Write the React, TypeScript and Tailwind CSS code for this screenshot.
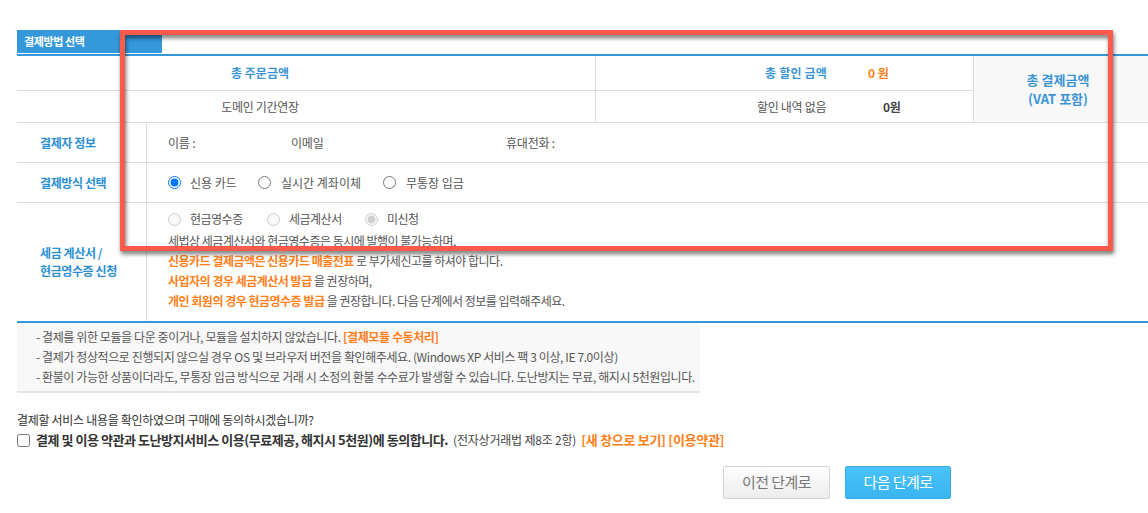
import React from "react";

const blue = "text-[#2b8fd6]";

function Radio({ checked, disabled }: { checked?: boolean; disabled?: boolean }) {
  return (
    <input
      type="radio"
      className="m-0 h-[13px] w-[13px] shrink-0"
      defaultChecked={checked}
      disabled={disabled}
      readOnly
    />
  );
}

export default function App() {
  return (
    <div className="relative h-[513px] w-[1148px] overflow-hidden bg-white font-['Noto_Sans_CJK_KR','Noto_Sans',sans-serif] text-[#555]">
      <div className="pl-[17px] pt-[30px]">
        {/* tab */}
        <div className="flex h-[23px] w-[145px] items-center bg-[#3498db] pl-[7px] text-[11px] font-bold tracking-[-0.4px] text-white">
          결제방법 선택
        </div>
        <div className="mt-[1px] w-[1140px] border-t-2 border-[#3498db]">
          {/* header */}
          <div className="flex border-b border-[#dddddd]">
            <div className="flex w-[578px] flex-col">
              <div className="flex h-[35px] items-center justify-center border-b border-[#dddddd] pr-[92px] text-[12px] font-bold text-[#3a95d6]">
                총 주문금액
              </div>
              <div className="flex h-[31px] items-center justify-center pr-[92px] text-[12px] tracking-[-0.3px]">
                도메인 기간연장
              </div>
            </div>
            <div className="flex w-[378px] flex-col border-l border-[#dddddd]">
              <div className="flex h-[35px] items-center border-b border-[#dddddd] pl-[169px]">
                <span className="w-[103px] text-[12px] font-bold text-[#3a95d6] tracking-[0.2px]">총 할인 금액</span>
                <span className="text-[12px] font-bold text-[#ff7f1a]">0 원</span>
              </div>
              <div className="flex h-[31px] items-center pl-[161px] text-[12px] tracking-[-0.3px]">
                <span className="w-[126px]">할인 내역 없음</span>
                <span className="font-bold text-[#444]">0원</span>
              </div>
            </div>
            <div className="flex w-[175px] flex-col items-center justify-center border-l border-[#dddddd] bg-[#f8f8f8] pr-[6px] text-[13px] font-bold leading-[19px] tracking-[0px] text-[#3a95d6]">
              <span>총 결제금액</span>
              <span>(VAT 포함)</span>
            </div>
          </div>

          {/* 결제자 정보 */}
          <div className="flex h-[40px] border-b border-[#dddddd]">
            <div className={`flex w-[130px] items-center border-r border-[#dddddd] pl-[23px] text-[12px] font-bold tracking-[-0.4px] ${blue}`}>
              결제자 정보
            </div>
            <div className="flex items-center pl-[21px] text-[12px] tracking-[-0.2px]">
              <span className="w-[123px]">이름 :</span>
              <span className="w-[215px]">이메일</span>
              <span>휴대전화 :</span>
            </div>
          </div>

          {/* 결제방식 선택 */}
          <div className="flex h-[40px] border-b border-[#dddddd]">
            <div className={`flex w-[130px] items-center border-r border-[#dddddd] pl-[23px] text-[12px] font-bold tracking-[-0.4px] ${blue}`}>
              결제방식 선택
            </div>
            <div className="flex items-center pl-[21px] text-[12px] tracking-[0px]">
              <label className="flex w-[90px] items-center gap-[9px]">
                <Radio checked />
                <span>신용 카드</span>
              </label>
              <label className="flex w-[125px] items-center gap-[10px]">
                <Radio />
                <span>실시간 계좌이체</span>
              </label>
              <label className="flex items-center gap-[10px]">
                <Radio />
                <span>무통장 입금</span>
              </label>
            </div>
          </div>

          {/* 세금 계산서 */}
          <div className="flex h-[118px]">
            <div className={`flex w-[130px] flex-col justify-center border-r border-[#dddddd] pl-[23px] text-[12px] font-bold leading-[18px] tracking-[-0.4px] ${blue}`}>
              <span>세금 계산서 /</span>
              <span>현금영수증 신청</span>
            </div>
            <div className="flex flex-col pl-[21px] pt-[6px] text-[12px] leading-[20px] tracking-[-0.5px]">
              <div className="flex items-center">
                <label className="flex w-[99px] items-center gap-[9px]">
                  <Radio disabled />
                  <span>현금영수증</span>
                </label>
                <label className="flex w-[98px] items-center gap-[9px]">
                  <Radio disabled />
                  <span>세금계산서</span>
                </label>
                <label className="flex items-center gap-[9px]">
                  <Radio checked disabled />
                  <span>미신청</span>
                </label>
              </div>
              <div className="mt-[2px]">세법상 세금계산서와 현금영수증은 동시에 발행이 불가능하며,</div>
              <div>
                <b className="text-[#ff7f1a]">신용카드 결제금액은 신용카드 매출전표</b> 로 부가세신고를 하셔야 합니다.
              </div>
              <div>
                <b className="text-[#ff7f1a]">사업자의 경우 세금계산서 발급</b> 을 권장하며,
              </div>
              <div>
                <b className="text-[#ff7f1a]">개인 회원의 경우 현금영수증 발급</b> 을 권장합니다. 다음 단계에서 정보를 입력해주세요.
              </div>
            </div>
          </div>
          <div className="border-t-2 border-[#3498db]" />
        </div>

        {/* notice */}
        <div className="w-[683px] border-b-2 border-[#e4e4e4] bg-[#f8f8f8] py-[4px] pl-[19px] text-[12px] leading-[20px] tracking-[-0.4px] text-[#555]">
          <div>
            - 결제를 위한 모듈을 다운 중이거나, 모듈을 설치하지 않았습니다.{" "}
            <b className="text-[#ff7f1a]">[결제모듈 수동처리]</b>
          </div>
          <div>- 결제가 정상적으로 진행되지 않으실 경우 OS 및 브라우저 버전을 확인해주세요. (Windows XP 서비스 팩 3 이상, IE 7.0이상)</div>
          <div>- 환불이 가능한 상품이더라도, 무통장 입금 방식으로 거래 시 소정의 환불 수수료가 발생할 수 있습니다. 도난방지는 무료, 해지시 5천원입니다.</div>
        </div>

        <div className="mt-[17px] text-[12px] leading-[20px] tracking-[-0.3px] text-[#333]">
          결제할 서비스 내용을 확인하였으며 구매에 동의하시겠습니까?
        </div>
        <div className="flex h-[20px] items-center text-[#333]">
          <input type="checkbox" className="m-0 h-[13px] w-[13px]" />
          <span className="ml-[6px] text-[13px] font-bold tracking-[-0.45px]">
            결제 및 이용 약관과 도난방지서비스 이용(무료제공, 해지시 5천원)에 동의합니다.
          </span>
          <span className="ml-[5px] text-[12px] tracking-[-0.2px] text-[#444]">(전자상거래법 제8조 2항)</span>
          <span className="ml-[5px] text-[13px] font-bold tracking-[-0.3px] text-[#ff7f1a]">[새 창으로 보기] [이용약관]</span>
        </div>

        <div className="mt-[16px] flex gap-[15px] pl-[706px]">
          <button className="flex h-[33px] w-[107px] items-center justify-center rounded-[2px] border border-[#d4d4d4] bg-gradient-to-b from-[#ffffff] to-[#ececec] text-[15px] tracking-[-0.6px] text-[#777]">
            이전 단계로
          </button>
          <button className="flex h-[33px] w-[106px] items-center justify-center rounded-[2px] border border-[#36ade8] bg-gradient-to-b from-[#49c2f8] to-[#3bb5f1] text-[15px] tracking-[-0.6px] text-white">
            다음 단계로
          </button>
        </div>
      </div>

      {/* red highlight overlay */}
      <div className="pointer-events-none absolute left-[120px] top-[30px] h-[221px] w-[993px] border-[5px] border-[#ff5a4b] [filter:drop-shadow(1px_3px_2px_rgba(0,0,0,0.55))]" />
    </div>
  );
}
